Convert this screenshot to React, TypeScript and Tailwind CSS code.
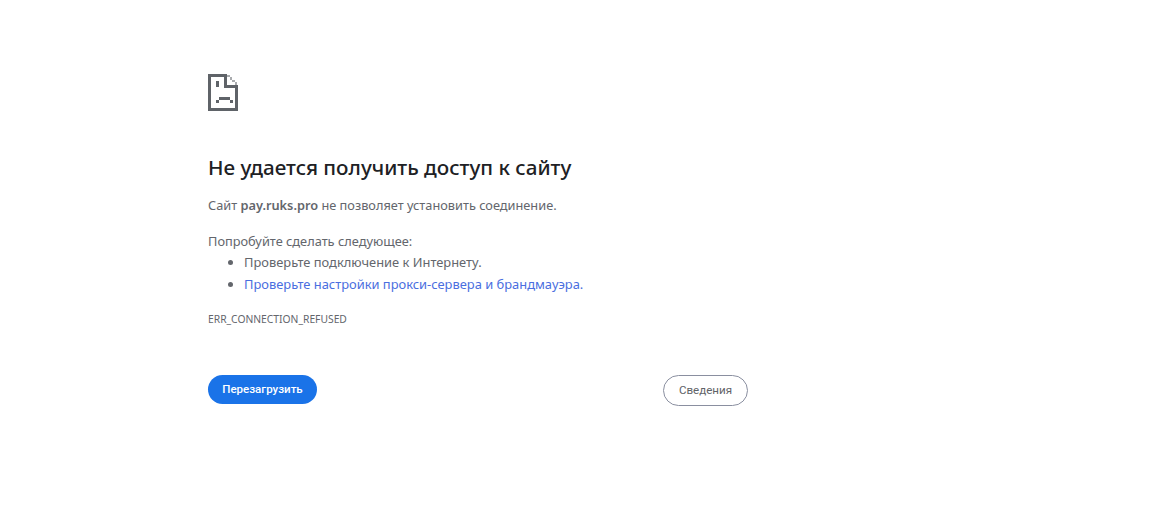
import React from 'react';

const SadPageIcon = () => (
  <svg width="30" height="37" viewBox="0 0 30 37" className="block" shapeRendering="crispEdges" fill="#5f6368">
    <path d="M0 0h19v3H3v31h24V14h3v23H0z" />
    <path d="M16 0h3v11h11v3H16z" />
    <path d="M19 1h3v2h-3zM22 3h2v3h-2zM24 6h3v2h-3zM27 8h2v3h-2z" fill="#a9abae" />
    <path d="M8 7h3v6H8z" />
    <path d="M11 23h11v3H11zM8 26h3v3H8zM22 26h3v3h-3z" />
  </svg>
);

export default function App() {
  return (
    <div className="min-h-[528px] bg-white pl-[208px] pt-[74px] font-['Noto_Sans','Open_Sans',sans-serif]">
      <div className="w-[540px]">
        <SadPageIcon />
        <h1 className="mt-[42px] text-[20.65px] leading-[28px] font-medium text-[#202124]">
          Не удается получить доступ к сайту
        </h1>
        <p className="mt-[14px] text-[12.78px] leading-[20px] text-[#63666c]">
          Сайт <strong className="font-semibold">pay.ruks.pro</strong> не позволяет установить соединение.
        </p>
        <p className="mt-[16px] text-[12.8px] leading-[20px] text-[#63666c]">Попробуйте сделать следующее:</p>
        <ul className="list-disc pl-[36px] text-[12.9px] text-[#63666c]">
          <li className="mt-[1px] leading-[20px]">Проверьте подключение к Интернету.</li>
          <li className="mt-[2px] leading-[20px]">
            <a className="text-[#4a6ee0]">Проверьте настройки прокси-сервера и брандмауэра.</a>
          </li>
        </ul>
        <div className="mt-[18px] text-[10.3px] leading-[14px] text-[#63666c]">ERR_CONNECTION_REFUSED</div>
        <div className="mt-[49px] flex items-start justify-between">
          <button className="h-[29px] w-[109px] rounded-full bg-[#1a73e8] font-['Roboto',sans-serif] text-[11.5px] font-medium text-white">
            Перезагрузить
          </button>
          <button className="h-[31px] w-[85px] rounded-full border border-[#8a8fa0] bg-white font-['Roboto',sans-serif] text-[11.6px] text-[#5f6368]">
            Сведения
          </button>
        </div>
      </div>
    </div>
  );
}
